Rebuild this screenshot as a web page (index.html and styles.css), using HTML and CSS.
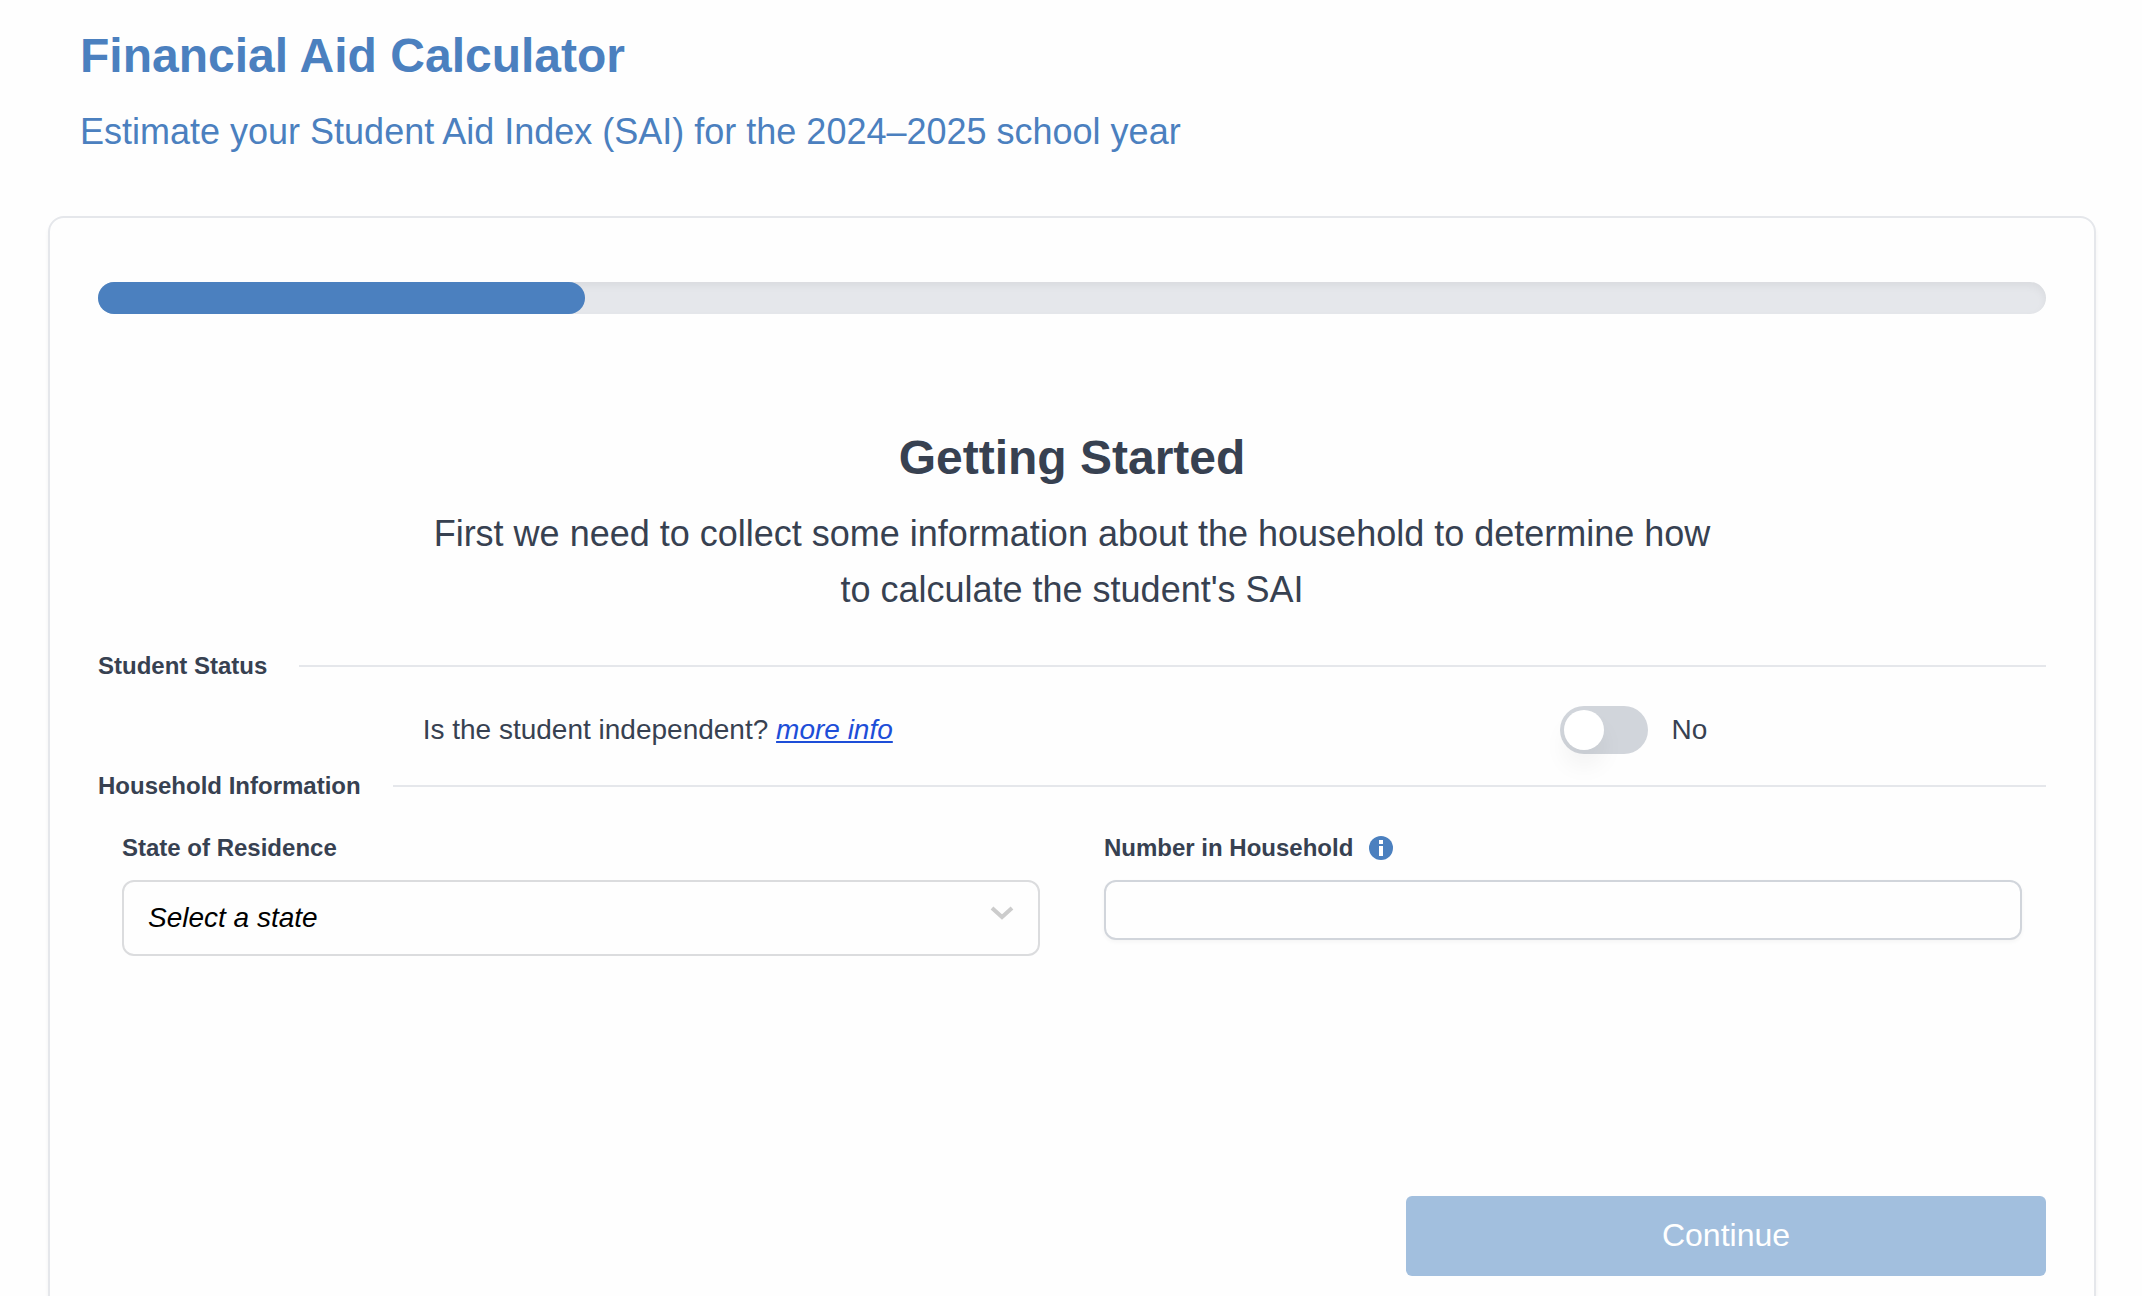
FILE: index.html
```html
<!DOCTYPE html>
<html lang="en">
<head>
  <meta charset="UTF-8">
  <meta name="viewport" content="width=device-width, initial-scale=1.0">
  <title>Financial Aid Calculator</title>
  <link rel="stylesheet" href="styles.css">
</head>
<body>

  <header class="page-header">
    <h1>Financial Aid Calculator</h1>
    <p>Estimate your Student Aid Index (SAI) for the 2024–2025 school year</p>
  </header>

  <main class="card">
    <div class="progress" role="progressbar" aria-label="Progress" aria-valuemin="0" aria-valuemax="100" aria-valuenow="25">
      <div class="progress-bar" style="width: 25%"></div>
    </div>

    <div class="intro">
      <h2>Getting Started</h2>
      <p>First we need to collect some information about the household to determine how to calculate the student's SAI</p>
    </div>

    <form id="calculatorForm">
      <!-- Student Status -->
      <h3 class="section-title">Student Status</h3>
      <div class="question">
        <div>
          <label for="independent">Is the student independent?</label>
          <a href="#more-info">more info</a>
        </div>
        <div class="toggle">
          <input type="checkbox" id="independent" name="independent" role="switch">
          <span id="independentValue">No</span>
        </div>
      </div>

      <!-- Household Information -->
      <h3 class="section-title">Household Information</h3>
      <div class="fields">
        <div class="field">
          <label for="state">State of Residence</label>
          <div class="select-wrap">
            <select id="state" name="state">
              <option value="">Select a state</option>
            </select>
            <svg class="chevron" viewBox="0 0 24 14" aria-hidden="true">
              <path d="M2 2l10 9L22 2" fill="none" stroke="currentColor" stroke-width="4"/>
            </svg>
          </div>
        </div>
        <div class="field">
          <label for="household">
            Number in Household
            <svg class="info" viewBox="0 0 24 24" aria-hidden="true">
              <circle cx="12" cy="12" r="12" fill="#4b80bf"/>
              <path d="M10 4h4v4h-4zM10 10h4v10h-4z" fill="#fff"/>
            </svg>
          </label>
          <input type="text" id="household" name="household" inputmode="numeric">
        </div>
      </div>

      <div class="actions">
        <button type="submit" disabled>Continue</button>
      </div>
    </form>
  </main>

  <script>
    document.getElementById('independent').addEventListener('change', function () {
      document.getElementById('independentValue').innerText = this.checked ? 'Yes' : 'No';
    });
  </script>

</body>
</html>
```
FILE: styles.css
```css
* {
  box-sizing: border-box;
}

body {
  font-family: "Liberation Sans", Arial, sans-serif;
  font-size: 28px;
  line-height: 40px;
  margin: 0;
  padding: 24px 46px 24px 48px;
  color: #374151;
  background-color: #fefefe;
}

h1, h2, h3, p {
  margin: 0;
}

h1, h2 {
  font-size: 48px;
  line-height: 64px;
  margin-bottom: 16px;
}

.page-header {
  padding: 0 32px;
  margin-bottom: 56px;
  color: #4b80bf;
}

.page-header p, .intro p {
  font-size: 36px;
  line-height: 56px;
}

.card {
  padding: 64px 48px;
  border: 2px solid #e5e7eb;
  border-radius: 16px;
  box-shadow: 0 4px 4px rgba(0, 0, 0, 0.05);
}

.progress {
  height: 32px;
  border-radius: 16px;
  background-color: #e5e7eb;
  box-shadow: inset 0 4px 8px rgba(0, 0, 0, 0.05);
  margin-bottom: 112px;
}

.progress-bar {
  height: 100%;
  border-radius: 16px;
  background-color: #4b80bf;
}

.intro {
  width: calc(100% * 2 / 3);
  margin: 0 auto 32px;
  text-align: center;
}

.section-title {
  display: flex;
  align-items: center;
  gap: 32px;
  font-size: 24px;
  line-height: 32px;
}

.section-title::after {
  content: "";
  flex: 1;
  height: 2px;
  background-color: #e5e7eb;
}

.question {
  display: flex;
  align-items: center;
  justify-content: space-between;
  width: calc(100% * 2 / 3);
  margin: 24px auto 16px;
  padding-right: 14px;
}

.question a {
  font-style: italic;
  color: #1d4ed8;
}

.toggle {
  display: flex;
  align-items: center;
  gap: 24px;
}

.toggle input {
  appearance: none;
  width: 88px;
  height: 48px;
  margin: 0;
  padding: 4px;
  border-radius: 24px;
  background-color: #d1d5db;
  cursor: pointer;
}

.toggle input::before {
  content: "";
  display: block;
  width: 40px;
  height: 40px;
  border-radius: 50%;
  background-color: #fff;
  box-shadow: 0 16px 24px rgba(0, 0, 0, 0.05);
}

.toggle input:checked {
  background-color: #4b80bf;
}

.toggle input:checked::before {
  margin-left: 40px;
}

.fields {
  display: grid;
  grid-template-columns: 1fr 1fr;
  align-items: start;
  gap: 64px;
  padding: 30px 24px 0;
}

.field label {
  display: flex;
  align-items: center;
  gap: 16px;
  font-size: 24px;
  font-weight: bold;
  line-height: 32px;
  margin-bottom: 16px;
}

.field input, .field select {
  display: block;
  width: 100%;
  padding: 0 24px;
  border: 2px solid #d1d5db;
  border-radius: 12px;
  background-color: #fefefe;
  font: inherit;
}

.field input {
  height: 60px;
  box-shadow: 0 2px 4px rgba(0, 0, 0, 0.04);
}

.field select {
  appearance: none;
  height: 76px;
  border-color: #dbdcde;
  font-style: italic;
  color: #000;
}

.select-wrap {
  position: relative;
}

.chevron {
  position: absolute;
  top: 26px;
  right: 26px;
  width: 24px;
  height: 14px;
  color: #ccc;
  pointer-events: none;
}

.info {
  width: 24px;
  height: 24px;
}

.actions {
  display: flex;
  justify-content: flex-end;
  margin-top: 240px;
}

.actions button {
  width: 640px;
  max-width: 100%;
  height: 80px;
  padding: 0 24px 2px;
  border: none;
  border-radius: 6px;
  background-color: #a2bfde;
  color: #fff;
  font-family: inherit;
  font-size: 32px;
}
```
